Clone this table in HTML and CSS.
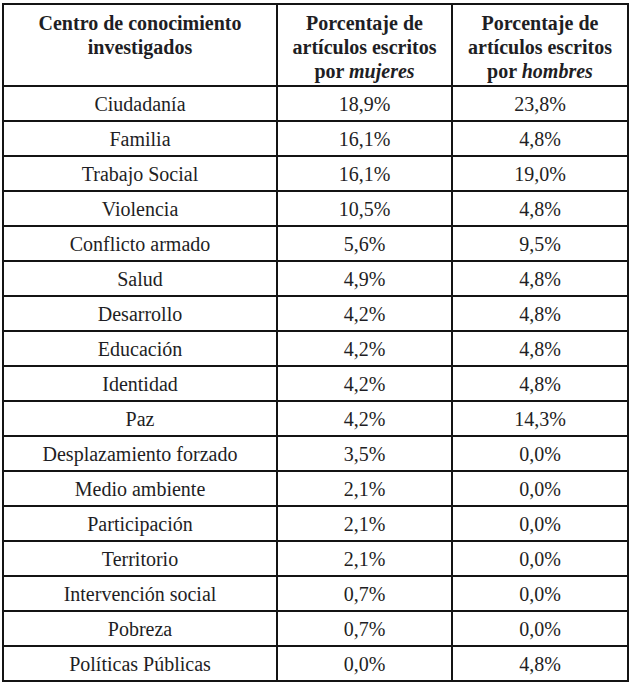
FILE: index.html
```html
<!DOCTYPE html>
<html lang="es">
<head>
<meta charset="utf-8">
<title>Tabla</title>
<link rel="stylesheet" href="styles.css">
</head>
<body>
<table class="data">
  <colgroup>
    <col class="c1">
    <col class="c2">
    <col class="c3">
  </colgroup>
  <thead>
    <tr class="head">
      <th>Centro de conocimiento<br>investigados</th>
      <th>Porcentaje de<br>artículos escritos<br>por <em>mujeres</em></th>
      <th>Porcentaje de<br>artículos escritos<br>por <em>hombres</em></th>
    </tr>
  </thead>
  <tbody>
    <tr><td>Ciudadanía</td><td>18,9%</td><td>23,8%</td></tr>
    <tr><td>Familia</td><td>16,1%</td><td>4,8%</td></tr>
    <tr><td>Trabajo Social</td><td>16,1%</td><td>19,0%</td></tr>
    <tr><td>Violencia</td><td>10,5%</td><td>4,8%</td></tr>
    <tr><td>Conflicto armado</td><td>5,6%</td><td>9,5%</td></tr>
    <tr><td>Salud</td><td>4,9%</td><td>4,8%</td></tr>
    <tr><td>Desarrollo</td><td>4,2%</td><td>4,8%</td></tr>
    <tr><td>Educación</td><td>4,2%</td><td>4,8%</td></tr>
    <tr><td>Identidad</td><td>4,2%</td><td>4,8%</td></tr>
    <tr><td>Paz</td><td>4,2%</td><td>14,3%</td></tr>
    <tr><td>Desplazamiento forzado</td><td>3,5%</td><td>0,0%</td></tr>
    <tr><td>Medio ambiente</td><td>2,1%</td><td>0,0%</td></tr>
    <tr><td>Participación</td><td>2,1%</td><td>0,0%</td></tr>
    <tr><td>Territorio</td><td>2,1%</td><td>0,0%</td></tr>
    <tr><td>Intervención social</td><td>0,7%</td><td>0,0%</td></tr>
    <tr><td>Pobreza</td><td>0,7%</td><td>0,0%</td></tr>
    <tr><td>Políticas Públicas</td><td>0,0%</td><td>4,8%</td></tr>
  </tbody>
</table>
</body>
</html>
```
FILE: styles.css
```css
html, body {
  margin: 0;
  padding: 0;
  background: #ffffff;
}

body {
  padding: 3px 0 0 2px;
  font-family: "Liberation Serif", "Times New Roman", serif;
  color: #1e1e24;
}

.data {
  border-collapse: collapse;
  table-layout: fixed;
  width: 625px;
}

.c1 { width: 274px; }
.c2 { width: 175px; }
.c3 { width: 176px; }

.data th,
.data td {
  border: 2px solid #141414;
  padding: 0;
  text-align: center;
  font-size: 20px;
}

.data th {
  vertical-align: top;
  font-weight: bold;
  line-height: 24px;
  padding-top: 6px;
}

.data th em {
  font-style: italic;
}

.head {
  height: 82px;
}

.data td {
  height: 33px;
  line-height: 22px;
  vertical-align: middle;
}
```
